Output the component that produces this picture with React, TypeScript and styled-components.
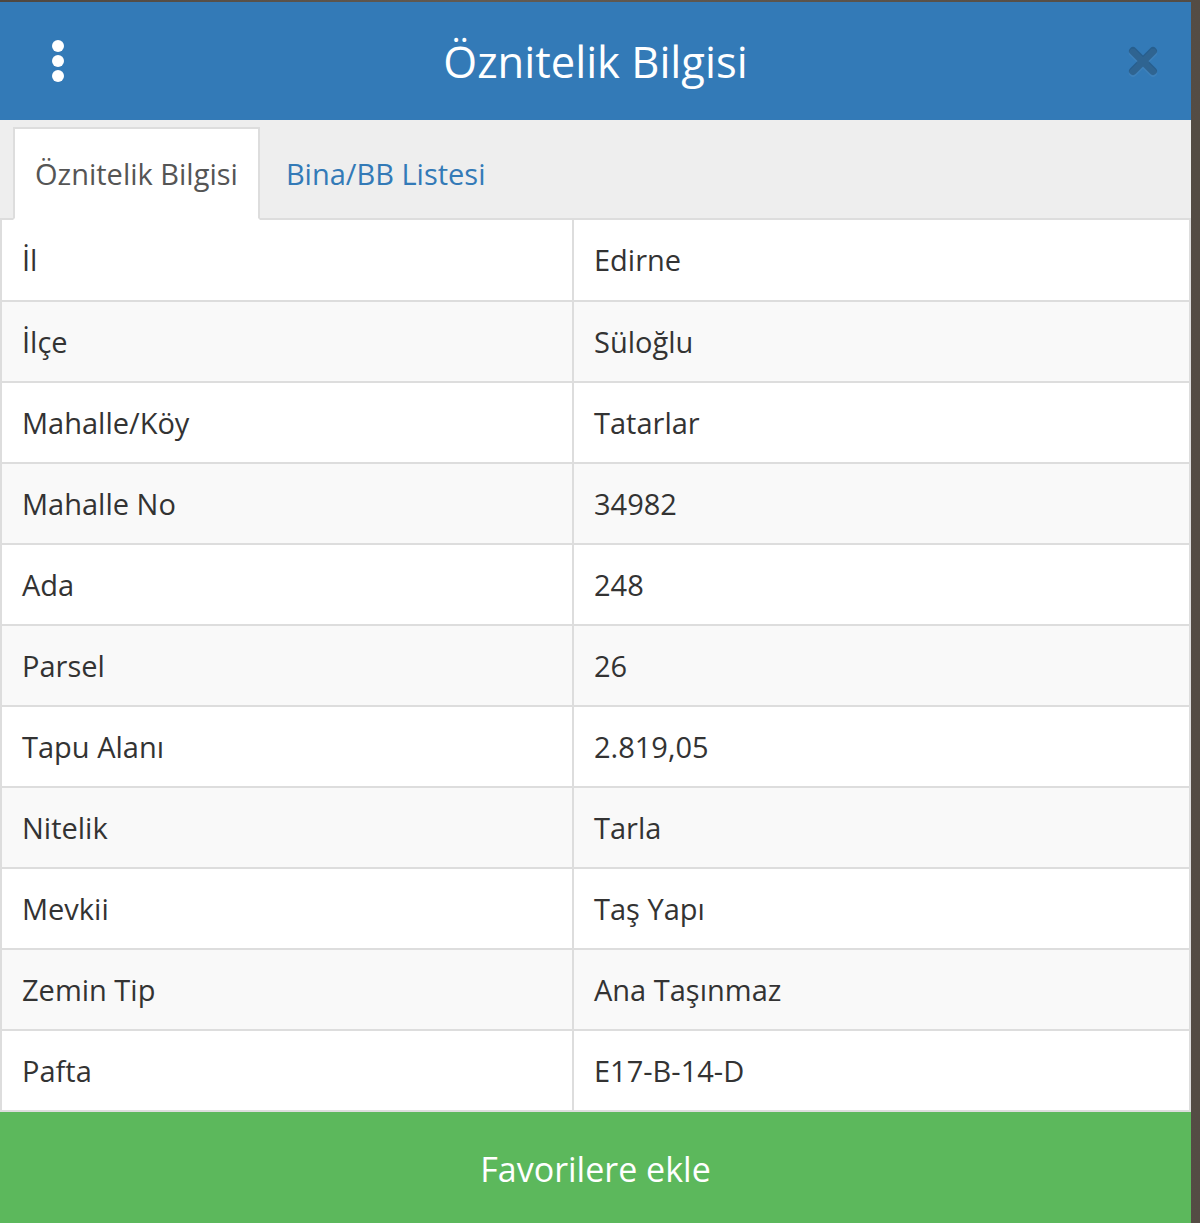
import * as React from "react";
import styled, { createGlobalStyle } from "styled-components";

const GlobalStyle = createGlobalStyle`
  html, body {
    margin: 0;
    padding: 0;
    background: #5b534a;
  }
  body {
    font-family: "Open Sans", "Noto Sans", sans-serif;
    color: #333333;
  }
`;

const rows = [
  ["İl", "Edirne"],
  ["İlçe", "Süloğlu"],
  ["Mahalle/Köy", "Tatarlar"],
  ["Mahalle No", "34982"],
  ["Ada", "248"],
  ["Parsel", "26"],
  ["Tapu Alanı", "2.819,05"],
  ["Nitelik", "Tarla"],
  ["Mevkii", "Taş Yapı"],
  ["Zemin Tip", "Ana Taşınmaz"],
  ["Pafta", "E17-B-14-D"],
];

const Page = styled.div`
  width: 1200px;
  height: 1223px;
  box-sizing: border-box;
  padding-top: 2px;
  overflow: hidden;
  background: linear-gradient(90deg, #4f4740, #625a51 40%, #544c44);
`;

const Panel = styled.div`
  width: 1191px;
  display: flex;
  flex-direction: column;
  background: #ffffff;
`;

const Header = styled.div`
  height: 118px;
  background: #337ab7;
  display: grid;
  grid-template-columns: 120px 1fr 120px;
  align-items: center;
`;

const Kebab = styled.div`
  display: flex;
  flex-direction: column;
  gap: 3px;
  padding-left: 52px;
  span {
    width: 12px;
    height: 12px;
    border-radius: 50%;
    background: #ffffff;
  }
`;

const Title = styled.h4`
  margin: 0;
  text-align: center;
  color: #ffffff;
  font-size: 43.5px;
  font-weight: 500;
`;

const Close = styled.div`
  justify-self: end;
  margin-right: 32px;
  width: 32px;
  height: 32px;
  svg {
    display: block;
    filter: drop-shadow(0 2px 0 rgba(255, 255, 255, 0.25));
  }
`;

const TabBar = styled.div`
  background: #eeeeee;
  padding: 7px 0 0 13px;
  display: flex;
  border-bottom: 2px solid #dddddd;
  height: 100px;
  box-sizing: border-box;
`;

const Tab = styled.div<{ $active?: boolean }>`
  box-sizing: border-box;
  height: 93px;
  margin-bottom: -2px;
  margin-right: 4px;
  padding: 0 20px 0 20px;
  display: flex;
  align-items: center;
  font-size: 29px;
  color: ${({ $active }) => ($active ? "#555555" : "#337ab7")};
  background: ${({ $active }) => ($active ? "#ffffff" : "transparent")};
  border: 2px solid ${({ $active }) => ($active ? "#dddddd" : "transparent")};
  border-bottom-color: transparent;
`;

const Table = styled.table`
  width: 100%;
  border-collapse: collapse;
  table-layout: fixed;
  font-size: 29px;
  color: #333333;
`;

const Row = styled.tr<{ $striped: boolean }>`
  background: ${({ $striped }) => ($striped ? "#f9f9f9" : "#ffffff")};
`;

const Cell = styled.td`
  height: 81px;
  box-sizing: border-box;
  padding: 0 20px;
  line-height: 40px;
  border: 2px solid #dddddd;
  border-top: none;
  &:first-child {
    width: 572px;
    border-left: 2px solid #dddddd;
  }
`;

const FavButton = styled.button`
  display: block;
  width: 100%;
  height: 113px;
  margin: 0;
  border: none;
  background: #5cb85c;
  color: #ffffff;
  font-family: "Open Sans", "Noto Sans", sans-serif;
  font-size: 34px;
  font-weight: 500;
  cursor: pointer;
`;

export default function App() {
  return (
    <Page>
      <GlobalStyle />
      <Panel>
        <Header>
          <Kebab>
            <span />
            <span />
            <span />
          </Kebab>
          <Title>Öznitelik Bilgisi</Title>
          <Close>
            <svg width="32" height="32" viewBox="0 0 32 32">
              <path
                d="M6 6 L26 26 M26 6 L6 26"
                stroke="rgba(0,0,0,0.22)"
                strokeWidth="8"
                strokeLinecap="round"
              />
            </svg>
          </Close>
        </Header>
        <TabBar>
          <Tab $active>Öznitelik Bilgisi</Tab>
          <Tab>Bina/BB Listesi</Tab>
        </TabBar>
        <Table>
          <tbody>
            {rows.map(([label, value], ix) => (
              <Row key={label} $striped={ix % 2 === 1}>
                <Cell>{label}</Cell>
                <Cell>{value}</Cell>
              </Row>
            ))}
          </tbody>
        </Table>
        <FavButton>Favorilere ekle</FavButton>
      </Panel>
    </Page>
  );
}
